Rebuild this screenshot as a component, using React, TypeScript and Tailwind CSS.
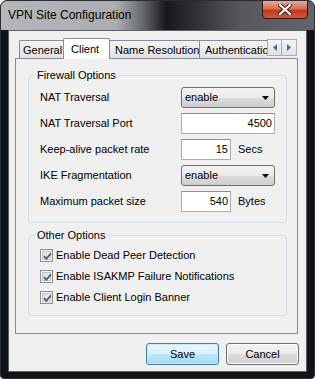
import React from "react";

const font = "font-['Liberation_Sans',Arial,sans-serif]";

const CheckRow = ({ label }: { label: string }) => (
  <div className="flex items-center h-[21px]">
    <div className="w-[13px] h-[13px] border border-[#8f8f8f] bg-[#f4f4f4] p-px">
      <div className="relative w-full h-full border border-[#c6c6c6] bg-[linear-gradient(135deg,#d8d8d8,#fafafa)]">
        <svg className="absolute -left-px -top-px" width="11" height="11" viewBox="0 0 11 11">
          <path d="M2 5.2 L4.3 7.8 L9 2.3" fill="none" stroke="#4a5f8f" strokeWidth="2" />
        </svg>
      </div>
    </div>
    <span className="ml-[3px] text-[11px] text-black whitespace-nowrap">{label}</span>
  </div>
);

const Dropdown = ({ value }: { value: string }) => (
  <div className="flex items-center justify-between w-[94px] h-[21px] rounded-[3px] border border-[#707070] bg-[linear-gradient(#f3f3f3_0%,#ebebeb_50%,#dddddd_51%,#cfcfcf_100%)] pl-[3px] pr-[5px]">
    <span className="text-[11px] text-black">{value}</span>
    <svg width="7" height="4" viewBox="0 0 7 4">
      <path d="M0 0 H7 L3.5 4 Z" fill="#000" />
    </svg>
  </div>
);

const Field = ({ value, w }: { value: string; w: string }) => (
  <div className={`${w} h-[21px] border border-[#abadb3] border-t-[#8e8f8f] bg-white flex items-center justify-end pr-[2px]`}>
    <span className="text-[11px] text-black">{value}</span>
  </div>
);

const Row = ({ label, children }: { label: string; children: React.ReactNode }) => (
  <div className="flex items-center h-[21px]">
    <span className="w-[141px] text-[11px] text-black whitespace-nowrap">{label}</span>
    {children}
  </div>
);

export default function App() {
  return (
    <div className={`w-[315px] h-[379px] bg-white ${font}`}>
      <div className="w-[315px] h-[379px] flex flex-col rounded-t-[7px] rounded-b-[4px] border border-[#2a2e32] bg-[#111417] overflow-hidden">
        {/* title bar */}
        <div className="h-[29px] flex items-start justify-between bg-[linear-gradient(90deg,#b4b7b9_0px,#abaeb0_115px,#6b6f73_140px,#16191c_165px,#2a2e32_190px,#55595d_240px,#62666a_313px)]">
          <span className="pl-[7px] pt-[7px] text-[12px] text-black leading-[15px] whitespace-nowrap">VPN Site Configuration</span>
          <div className="mr-[6px] -mt-px w-[46px] h-[19px] rounded-b-[4px] border border-[#3b1208] bg-[linear-gradient(#e9a898_0%,#d66f57_45%,#c03c1f_55%,#d0583a_100%)] flex items-center justify-center">
            <svg width="14" height="11" viewBox="0 0 14 11">
              <path d="M2 1 L12 10 M12 1 L2 10" stroke="#3a1a14" strokeWidth="4" strokeLinecap="square" />
              <path d="M2 1 L12 10 M12 1 L2 10" stroke="#ffffff" strokeWidth="2.2" strokeLinecap="square" />
            </svg>
          </div>
        </div>

        {/* client area */}
        <div className="mx-[7px] h-[342px] border border-[#5d6165] bg-[#f0f0f0] flex flex-col">
          <div className="ml-[6px] mt-[7px] w-[283px]">
            {/* tabs */}
            <div className="flex items-end h-[20px] text-[11px] text-black whitespace-nowrap">
              <div className="ml-[4px] w-[44px] h-[18px] border border-b-0 border-r-0 border-[#898c95] rounded-tl-[2px] bg-[linear-gradient(#f2f2f2,#e3e3e3)] flex items-center pl-[3px] pt-[2px] overflow-hidden">
                General
              </div>
              <div className="relative z-10 -mb-px w-[47px] h-[21px] border border-b-0 border-[#898c95] rounded-t-[2px] bg-white flex items-start pl-[7px] pt-[2px]">
                Client
              </div>
              <div className="w-[90px] h-[18px] border border-b-0 border-l-0 border-[#898c95] bg-[linear-gradient(#f2f2f2,#e3e3e3)] flex items-center pl-[5px] pt-[2px] overflow-hidden">
                Name Resolution
              </div>
              <div className="w-[67px] h-[18px] border-t border-[#898c95] bg-[linear-gradient(#f2f2f2,#e3e3e3)] flex items-center pl-[5px] pt-[2px] overflow-hidden">
                Authentication
              </div>
              <div className="flex mb-[2px] h-[17px]">
                <div className="w-[15px] h-[17px] border border-[#acacac] bg-[linear-gradient(#f3f3f3,#e2e2e2)] flex items-center justify-center">
                  <svg width="4" height="7" viewBox="0 0 4 7"><path d="M4 0 V7 L0 3.5 Z" fill="#3e6ca8" /></svg>
                </div>
                <div className="w-[15px] h-[17px] border border-l-0 border-[#acacac] bg-[linear-gradient(#f3f3f3,#e2e2e2)] flex items-center justify-center">
                  <svg width="4" height="7" viewBox="0 0 4 7"><path d="M0 0 V7 L4 3.5 Z" fill="#3e6ca8" /></svg>
                </div>
              </div>
            </div>

            {/* panel */}
            <div className="h-[276px] border border-[#898c95] bg-[#f0f0f0] pl-[12px] pt-[16px]">
              <div className="relative w-[259px] h-[148px] border border-[#d5dfe5] rounded-[3px] pl-[11px] pt-[11px] flex flex-col gap-[5px]">
                <span className="absolute -top-[8px] left-[6px] px-[2px] bg-[#f0f0f0] text-[11px] text-black leading-[14px] whitespace-nowrap">Firewall Options</span>
                <Row label="NAT Traversal">
                  <Dropdown value="enable" />
                </Row>
                <Row label="NAT Traversal Port">
                  <Field value="4500" w="w-[94px]" />
                </Row>
                <Row label="Keep-alive packet rate">
                  <Field value="15" w="w-[50px]" />
                  <span className="ml-[7px] text-[11px] text-black">Secs</span>
                </Row>
                <Row label="IKE Fragmentation">
                  <Dropdown value="enable" />
                </Row>
                <Row label="Maximum packet size">
                  <Field value="540" w="w-[50px]" />
                  <span className="ml-[7px] text-[11px] text-black">Bytes</span>
                </Row>
              </div>

              <div className="relative mt-[12px] w-[259px] h-[81px] border border-[#d5dfe5] rounded-[3px] pl-[11px] pt-[9px] flex flex-col">
                <span className="absolute -top-[8px] left-[6px] px-[2px] bg-[#f0f0f0] text-[11px] text-black leading-[14px] whitespace-nowrap">Other Options</span>
                <CheckRow label="Enable Dead Peer Detection" />
                <CheckRow label="Enable ISAKMP Failure Notifications" />
                <CheckRow label="Enable Client Login Banner" />
              </div>
            </div>
          </div>

          {/* buttons */}
          <div className="flex justify-end gap-[7px] mt-[9px] mr-[7px]">
            <button className="w-[73px] h-[22px] rounded-[3px] border border-[#3c7fb1] bg-[linear-gradient(#eaf6fd_0%,#d9f0fc_50%,#bee6fd_51%,#a7d9f5_100%)] text-[11px] text-black shadow-[inset_0_0_0_1px_#c6eafd]">
              Save
            </button>
            <button className="w-[73px] h-[22px] rounded-[3px] border border-[#707070] bg-[linear-gradient(#f2f2f2_0%,#ebebeb_50%,#dddddd_51%,#cfcfcf_100%)] text-[11px] text-black shadow-[inset_0_0_0_1px_#fcfcfc]">
              Cancel
            </button>
          </div>
        </div>
      </div>
    </div>
  );
}
